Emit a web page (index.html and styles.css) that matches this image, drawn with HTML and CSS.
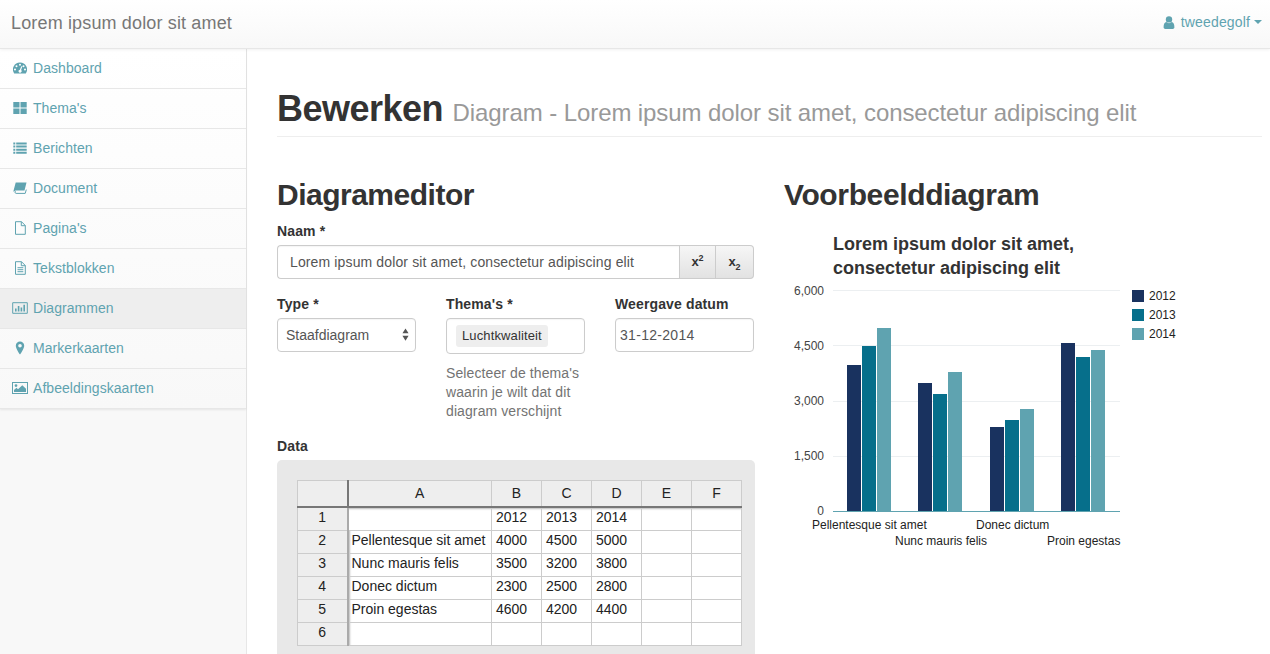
FILE: index.html
```html
<!DOCTYPE html>
<html lang="nl">
<head>
<meta charset="utf-8">
<title>Bewerken</title>
<link rel="stylesheet" href="styles.css">
</head>
<body>
<header class="navbar">
  <a class="brand">Lorem ipsum dolor sit amet</a>
  <a class="user">
    <svg class="user-icon" viewBox="0 0 12 13"><circle cx="6" cy="3.4" r="3.2"/><path d="M0.6 11.2C0.6 8.3 1.6 6.4 3.3 6.1 4 6.8 5 7.2 6 7.2 7 7.2 8 6.8 8.700 6.100 10.400 6.400 11.400 8.300 11.400 11.200 11.400 12.300 10.600 12.900 9.700 12.900H2.300C1.400 12.900 0.600 12.300 0.600 11.200Z"/></svg>
    <span>tweedegolf</span>
    <i class="caret"></i>
  </a>
</header>
<div class="shell">
  <aside class="sidebar">
    <ul class="menu">
      <li><svg class="ico" viewBox="0 0 14 14"><path fill-rule="evenodd" d="M7 1.500A7 7 0 0 0 1.200 12.500H12.800A7 7 0 0 0 7 1.500ZM7 2.800A1 1 0 1 1 7 4.800 1 1 0 0 1 7 2.800ZM3.500 4.200A1 1 0 1 1 3.500 6.200 1 1 0 0 1 3.500 4.200ZM10.500 4.200A1 1 0 1 1 10.500 6.200 1 1 0 0 1 10.500 4.200ZM2 7.500A1 1 0 1 1 2 9.500 1 1 0 0 1 2 7.500ZM12 7.500A1 1 0 1 1 12 9.500 1 1 0 0 1 12 7.500ZM8.300 5.200L9.300 5.500 8.100 9.100A1.500 1.500 0 1 1 6.900 8.700Z"/></svg>Dashboard</li>
      <li><svg class="ico" viewBox="0 0 14 14"><path d="M.3 1H6.500V6.500H.3ZM7.500 1H13.700V6.500H7.500ZM.3 7.500H6.500V13H.3ZM7.500 7.500H13.700V13H7.500Z"/></svg>Thema's</li>
      <li><svg class="ico" viewBox="0 0 14 14"><path d="M.3 1.500H2.300V3.500H.3ZM3.200 1.500H13.700V3.500H3.200ZM.3 4.600H2.300V6.600H.3ZM3.200 4.600H13.700V6.600H3.200ZM.3 7.700H2.300V9.700H.3ZM3.200 7.700H13.700V9.700H3.200ZM.3 10.800H2.300V12.800H.3ZM3.200 10.800H13.700V12.800H3.200Z"/></svg>Berichten</li>
      <li><svg class="ico" viewBox="0 0 14 14"><path d="M2.700 1.500H13.500L11.500 9.600H3C2.200 9.600 1.400 10.200 1.200 10.800L.6 10.800C.4 10.400.5 10 .6 9.600Z"/><path class="page" d="M3 10.500C2.300 10.500 2 11 2.100 11.500 2.200 12 2.600 12.400 3.100 12.400H12.200L13.300 8.600"/></svg>Document</li>
      <li><svg class="ico line" viewBox="0 0 14 14"><path d="M2.500 .7H8.500L12.300 4.500V13.300H2.500ZM8.300 .7V4.700H12.300"/></svg>Pagina's</li>
      <li><svg class="ico line" viewBox="0 0 14 14"><path d="M2.500 .7H8.500L12.300 4.500V13.300H2.500ZM8.300 .7V4.700H12.300M4.500 6.700H10.300M4.500 8.700H10.300M4.500 10.700H10.300"/></svg>Tekstblokken</li>
      <li class="active"><svg class="ico wide line" viewBox="0 0 16 12"><path d="M.7 .7H15.300V11.300H.7Z"/><path class="bars" d="M3 9.500V6.500H4.600V9.500ZM5.800 9.500V4H7.400V9.500ZM8.600 9.500V5.500H10.200V9.500ZM11.400 9.500V2.800H13V9.500Z"/></svg>Diagrammen</li>
      <li><svg class="ico" viewBox="0 0 14 14"><path fill-rule="evenodd" d="M7 .5A4.200 4.200 0 0 0 2.800 4.700C2.800 6.800 5.500 11.500 7 13.500 8.500 11.500 11.200 6.800 11.200 4.700A4.200 4.200 0 0 0 7 .5ZM7 2.900A1.800 1.800 0 1 1 7 6.500 1.800 1.800 0 0 1 7 2.900Z"/></svg>Markerkaarten</li>
      <li><svg class="ico wide" viewBox="0 0 16 12"><path fill-rule="evenodd" d="M0 0H16V12H0ZM1 1V11H15V1ZM4 2.200A1.400 1.400 0 1 1 4 5 1.400 1.400 0 0 1 4 2.200ZM2 10V8L4.500 5.800 6 7.200 10.300 3.200 14 6.800V10Z"/></svg>Afbeeldingskaarten</li>
    </ul>
  </aside>
  <main class="content">
    <h1 class="page-title">Bewerken <small>Diagram - Lorem ipsum dolor sit amet, consectetur adipiscing elit</small></h1>
    <div class="columns">
      <section class="editor">
        <h2>Diagrameditor</h2>
        <label class="lbl">Naam *</label>
        <div class="input-group">
          <input class="field name-field" type="text" value="Lorem ipsum dolor sit amet, consectetur adipiscing elit">
          <button class="btn">x<sup>2</sup></button>
          <button class="btn">x<sub>2</sub></button>
        </div>
        <div class="form-row">
          <div class="cell">
            <label class="lbl">Type *</label>
            <div class="select-wrap">
              <select class="field select"><option>Staafdiagram</option></select>
              <svg class="spinner" viewBox="0 0 8 14"><path d="M4 0L7.500 5.500H.5ZM4 14L.5 8.500H7.500Z"/></svg>
            </div>
          </div>
          <div class="cell">
            <label class="lbl">Thema's *</label>
            <div class="field tags"><span class="tag">Luchtkwaliteit</span></div>
            <p class="help">Selecteer de thema's waarin je wilt dat dit diagram verschijnt</p>
          </div>
          <div class="cell">
            <label class="lbl">Weergave datum</label>
            <input class="field date-field" type="text" value="31-12-2014">
          </div>
        </div>
        <label class="lbl data-lbl">Data</label>
        <div class="sheet-panel">
          <table class="sheet">
            <colgroup><col class="c0"><col class="c1"><col class="c2"><col class="c2"><col class="c2"><col class="c2"><col class="c2"></colgroup>
            <thead><tr><th></th><th>A</th><th>B</th><th>C</th><th>D</th><th>E</th><th>F</th></tr></thead>
            <tbody>
              <tr><th>1</th><td></td><td>2012</td><td>2013</td><td>2014</td><td></td><td></td></tr>
              <tr><th>2</th><td>Pellentesque sit amet</td><td>4000</td><td>4500</td><td>5000</td><td></td><td></td></tr>
              <tr><th>3</th><td>Nunc mauris felis</td><td>3500</td><td>3200</td><td>3800</td><td></td><td></td></tr>
              <tr><th>4</th><td>Donec dictum</td><td>2300</td><td>2500</td><td>2800</td><td></td><td></td></tr>
              <tr><th>5</th><td>Proin egestas</td><td>4600</td><td>4200</td><td>4400</td><td></td><td></td></tr>
              <tr><th>6</th><td></td><td></td><td></td><td></td><td></td><td></td></tr>
            </tbody>
          </table>
        </div>
      </section>
      <section class="preview">
        <h2>Voorbeelddiagram</h2>
        <svg class="chart" viewBox="0 0 478 340" width="478" height="340">
          <g class="chart-title"><text x="49" y="26">Lorem ipsum dolor sit amet,</text><text x="49" y="50">consectetur adipiscing elit</text></g>
          <g class="grid"><path d="M49 66.500H336M49 121.500H336M49 177.500H336M49 232.500H336"/></g>
          <g class="s1"><rect x="63" y="141" width="14" height="147"/><rect x="134" y="159" width="14" height="129"/><rect x="206" y="203" width="14" height="85"/><rect x="277" y="119" width="14" height="169"/></g>
          <g class="s2"><rect x="78" y="122" width="14" height="166"/><rect x="149" y="170" width="14" height="118"/><rect x="221" y="196" width="14" height="92"/><rect x="292" y="133" width="14" height="155"/></g>
          <g class="s3"><rect x="93" y="104" width="14" height="184"/><rect x="164" y="148" width="14" height="140"/><rect x="236" y="185" width="14" height="103"/><rect x="307" y="126" width="14" height="162"/></g>
          <path class="axis" d="M49 287.500H336"/>
          <g class="y-labels"><text x="40" y="71">6,000</text><text x="40" y="126">4,500</text><text x="40" y="181">3,000</text><text x="40" y="236">1,500</text><text x="40" y="291">0</text></g>
          <g class="x-labels"><text x="28" y="305">Pellentesque sit amet</text><text x="111" y="321">Nunc mauris felis</text><text x="192" y="305">Donec dictum</text><text x="263" y="321">Proin egestas</text></g>
          <rect class="s1" x="348" y="66" width="12" height="12"/><rect class="s2" x="348" y="85" width="12" height="12"/><rect class="s3" x="348" y="104" width="12" height="12"/>
          <g class="legend"><text x="365" y="76">2012</text><text x="365" y="95">2013</text><text x="365" y="114">2014</text></g>
        </svg>
      </section>
    </div>
  </main>
</div>
</body>
</html>
```
FILE: styles.css
```css
* { box-sizing: border-box; }
html, body { margin: 0; height: 100%; overflow: hidden; }
body {
  display: flex;
  flex-direction: column;
  font: 14px/20px "Liberation Sans", Arial, sans-serif;
  color: #333;
  background: #fff;
}
.navbar {
  flex: none;
  height: 49px;
  display: flex;
  align-items: center;
  justify-content: space-between;
  padding: 0 8px 2px 11px;
  background: linear-gradient(#fff, #f8f8f8);
  border-bottom: 1px solid #e7e7e7;
  box-shadow: 0 1px 3px rgba(0,0,0,.06);
  position: relative;
  z-index: 2;
}
.brand { font-size: 18px; letter-spacing: .15px; color: #777; }
.user { display: flex; align-items: center; margin-bottom: 2px; color: #5fa3b0; font-size: 14px; letter-spacing: .15px; }
.user-icon { width: 12px; height: 13px; fill: #5fa3b0; margin-right: 6px; }
.caret {
  width: 0; height: 0; margin-left: 4px;
  border-top: 4px solid #5fa3b0;
  border-left: 4px solid transparent;
  border-right: 4px solid transparent;
}
.shell { flex: 1; display: flex; min-height: 0; }
.sidebar {
  flex: none;
  width: 247px;
  background: #f8f8f8;
  border-right: 1px solid #e7e7e7;
}
.menu {
  list-style: none;
  margin: 0; padding: 0;
  background: linear-gradient(#fff, #f8f8f8);
  box-shadow: 0 1px 2px rgba(0,0,0,.08);
}
.menu li {
  height: 40px;
  display: flex;
  align-items: center;
  padding: 0 0 1px 13px;
  color: #5fa3b0;
  letter-spacing: .05px;
  border-bottom: 1px solid #e7e7e7;
}
.menu li.active { background: #eee; }
.ico { width: 14px; height: 14px; margin-right: 6px; fill: #5fa3b0; flex: none; }
.ico.wide { width: 16px; margin-left: -1px; margin-right: 5px; }
.ico.line { fill: none; stroke: #5fa3b0; stroke-width: 1; }
.ico .bars { fill: #5fa3b0; stroke: none; }
.ico .page { fill: none; stroke: #5fa3b0; stroke-width: 1; }
.content { flex: 1; min-width: 0; padding: 0 8px 0 30px; }
.page-title {
  margin: 40px 0 0;
  height: 48px;
  font-size: 36px;
  line-height: 40px;
  font-weight: bold;
  letter-spacing: -.5px;
  border-bottom: 1px solid #eee;
  white-space: nowrap;
}
.page-title small { font-size: 24px; font-weight: normal; letter-spacing: -.09px; color: #999; }
.columns { display: grid; grid-template-columns: 477px 1fr; column-gap: 30px; }
h2 { margin: 40px 0 0; font-size: 30px; line-height: 36px; font-weight: bold; letter-spacing: -.5px; }
.preview h2 { letter-spacing: -.37px; }
.lbl { display: block; font-weight: bold; letter-spacing: .13px; margin-bottom: 4px; }
.editor h2 { margin-bottom: 8px; }
.field {
  display: block;
  height: 34px;
  border: 1px solid #ccc;
  border-radius: 4px;
  background: #fff;
  font: 14px/20px "Liberation Sans", Arial, sans-serif;
  color: #555;
  box-shadow: inset 0 1px 1px rgba(0,0,0,.04);
  outline: none;
}
.input-group { display: flex; height: 34px; }
.name-field { flex: 1; min-width: 0; padding: 0 12px; border-radius: 4px 0 0 4px; border-right: 0; letter-spacing: .13px; }
.btn {
  width: 37px;
  padding: 0;
  border: 1px solid #ccc;
  border-left-width: 0;
  background: linear-gradient(#f6f6f6, #e2e2e2);
  font: bold 13px/20px "Liberation Sans", Arial, sans-serif;
  color: #333;
}
.btn:first-of-type { border-left-width: 1px; }
.btn:last-child { border-radius: 0 4px 4px 0; width: 38px; }
.btn sup, .btn sub { font-size: 9px; line-height: 0; }
.form-row { display: grid; grid-template-columns: repeat(3, 139px); column-gap: 30px; margin-top: 15px; }
.select-wrap { position: relative; }
.select {
  width: 100%;
  padding: 0 8px;
  appearance: none;
  -webkit-appearance: none;
}
.spinner { position: absolute; right: 7px; top: 10px; width: 7px; height: 13px; fill: #555; }
.tags { height: 36px; padding: 6px 9px; }
.tag {
  display: inline-block;
  height: 22px;
  padding: 0 6px;
  background: #eee;
  border-radius: 3px;
  font-size: 13px;
  letter-spacing: .13px;
  line-height: 22px;
  color: #333;
}
.date-field { width: 100%; padding: 0 4px; letter-spacing: .3px; }
.help { margin: 10px 0 0; line-height: 19px; letter-spacing: .1px; color: #737373; }
.data-lbl { margin-top: 15px; }
.sheet-panel {
  background: #e8e8e8;
  border-radius: 5px;
  padding: 20px 13px 20px 20px;
  width: 478px;
  margin-top: 4px;
}
.sheet {
  border-collapse: collapse;
  table-layout: fixed;
  width: 445px;
  background: #fff;
  color: #222;
  font-size: 14px;
  line-height: 19px;
}
.c0 { width: 50px; }
.c1 { width: 144px; }
.c2 { width: 50px; }
.sheet th, .sheet td {
  border: 1px solid #ccc;
  height: 23px;
  padding: 0 4px 3px;
  font-weight: normal;
  white-space: nowrap;
  overflow: hidden;
}
.sheet th { background: #eee; text-align: center; }
.sheet thead th { height: 26px; padding-bottom: 1px; line-height: 20px; border-bottom: 2px solid #777; }
.sheet thead th:first-child { border-right: 2px solid #777; }
.sheet tbody th { border-right: 2px solid #aaa; }
.sheet tbody td:nth-child(2) { padding-left: 3px; box-shadow: inset 3px 0 2px -2px #bbb; }
.sheet tbody tr:first-child td { box-shadow: inset 0 3px 2px -2px #bbb; }
.chart { display: block; margin-top: 11px; }
.chart text { font-family: "Liberation Sans", Arial, sans-serif; font-size: 12px; }
.chart .chart-title text { font-size: 18px; font-weight: bold; fill: #333; }
.grid path { stroke: #eceff1; fill: none; }
.axis { stroke: #5fa3b0; fill: none; }
.s1 { fill: #19325f; }
.s2 { fill: #066f8b; }
.s3 { fill: #5fa3b0; }
.y-labels text { fill: #444; text-anchor: end; }
.x-labels text, .legend text { fill: #222; }
```
